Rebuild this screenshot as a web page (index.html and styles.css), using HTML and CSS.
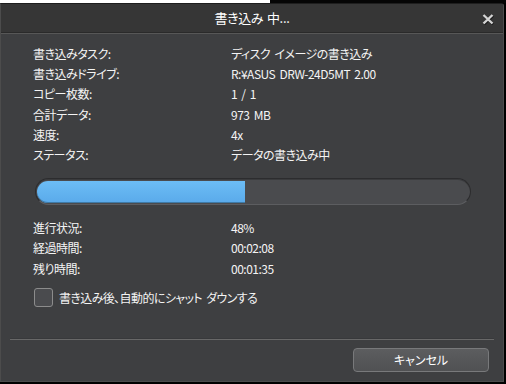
FILE: index.html
```html
<!DOCTYPE html>
<html lang="ja">
<head>
<meta charset="utf-8">
<title>書き込み 中...</title>
<link rel="stylesheet" href="styles.css">
</head>
<body>
<div class="topstrip"></div>
<div class="window">
  <div class="titlebar">
    <span></span>
    <span class="title">書き込み 中...</span>
    <span class="close">
      <svg width="14" height="12" viewBox="0 0 14 12">
        <path d="M2.5 2 L11.5 10.5 M11.5 2 L2.5 10.5" stroke="#1c1c1c" stroke-width="2.6" fill="none" transform="translate(0.6,0.8)"/>
        <path d="M2.5 2 L11.5 10.5 M11.5 2 L2.5 10.5" stroke="#d4d4d4" stroke-width="2.4" fill="none"/>
      </svg>
    </span>
  </div>
  <div class="content">
    <div class="info">
      <span>書き込みタスク:</span><span>ディスク イメージの書き込み</span>
      <span>書き込みドライブ:</span><span>R:¥ASUS DRW-24D5MT 2.00</span>
      <span>コピー枚数:</span><span>1 / 1</span>
      <span>合計データ:</span><span>973 MB</span>
      <span>速度:</span><span>4x</span>
      <span>ステータス:</span><span>データの書き込み中</span>
    </div>
    <div class="progress"><div class="fill" style="width:48%"></div></div>
    <div class="info">
      <span>進行状況:</span><span>48%</span>
      <span>経過時間:</span><span>00:02:08</span>
      <span>残り時間:</span><span>00:01:35</span>
    </div>
    <label class="check"><span class="box"></span><span>書き込み後、自動的にシャット ダウンする</span></label>
    <div class="sep"></div>
    <div class="actions"><button class="btn">キャンセル</button></div>
  </div>
</div>
</body>
</html>
```
FILE: styles.css
```css
html, body {
  margin: 0;
  padding: 0;
  background: #000;
  width: 506px;
  height: 384px;
  overflow: hidden;
  font-family: "Noto Sans CJK JP", "Liberation Sans", sans-serif;
  font-feature-settings: "palt";
  color: #f4f4f4;
}
.topstrip {
  height: 3px;
  background: linear-gradient(to right, #ffffff 270px, #050505 270px);
}
.window {
  width: 502px;
  height: 377px;
  border: 1px solid #4c4c4c;
  border-top-color: #1e1e1e;
  border-top-right-radius: 3px;
  background: #3e3f41;
  display: flex;
  flex-direction: column;
}
.titlebar {
  height: 28px;
  background: #363636;
  border-bottom: 1px solid #2a2a2a;
  box-shadow: 0 1px 0 #575757;
  display: grid;
  grid-template-columns: 1fr auto 1fr;
  align-items: center;
  padding-right: 8px;
}
.title {
  font-size: 13px;
  letter-spacing: -0.3px;
  word-spacing: 1px;
  line-height: 28px;
  color: #ffffff;
  padding-left: 8px;
}
.close {
  justify-self: end;
  display: flex;
  padding-top: 2px;
}
.content {
  flex: 1;
  display: flex;
  flex-direction: column;
  padding: 11px 0 0 32px;
}
.info {
  display: grid;
  grid-template-columns: 198px 1fr;
  font-size: 12px;
  letter-spacing: -0.5px;
  word-spacing: 2px;
  line-height: 20.2px;
}
.progress {
  margin: 13px 0 13px 2px;
  width: 433px;
  height: 25px;
  border-radius: 14px;
  border: 1px solid #2c2c2e;
  border-bottom-color: #5c5d60;
  background: #4a4b4e;
  box-shadow: inset 0 1px 0 #3a3b3d;
  display: flex;
  align-items: center;
  padding-left: 1px;
  overflow: hidden;
}
.fill {
  height: 22px;
  border-radius: 11px 0 0 11px;
  background: linear-gradient(#6cbdf6, #5aaaea);
  box-shadow: inset 0 -1px 0 #3f7aa6;
}
.check {
  margin-top: 9px;
  display: flex;
  align-items: center;
  gap: 6px;
  font-size: 12px;
  letter-spacing: -0.6px;
  word-spacing: 2px;
  margin-left: 1px;
}
.box {
  width: 17px;
  height: 17px;
  border: 1.5px solid #8c8c8c;
  border-radius: 3px;
  background: #4a4b4e;
}
.sep {
  margin: 32px 0 0 -23px;
  width: 484px;
  height: 1px;
  background: #686868;
  box-shadow: 0 -1px 0 #38393b;
}
.actions {
  display: flex;
  justify-content: flex-end;
  margin-top: 8px;
  padding-right: 14px;
}
.btn {
  width: 136px;
  height: 24px;
  border: 1px solid #78797b;
  border-radius: 4px;
  background: linear-gradient(#5c5d5f, #505153);
  color: #ffffff;
  font-family: "Noto Sans CJK JP", "Liberation Sans", sans-serif;
  font-feature-settings: "palt";
  font-size: 12px;
  padding: 0;
}
```
